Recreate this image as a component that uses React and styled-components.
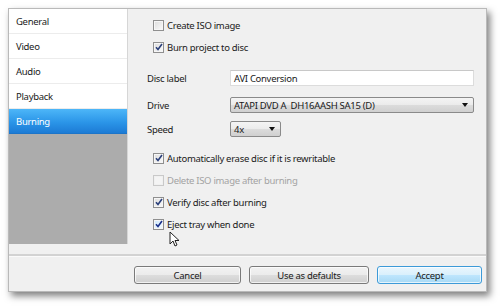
import React from "react";
import styled, { createGlobalStyle } from "styled-components";

const GlobalStyle = createGlobalStyle`
  html, body {
    margin: 0;
    padding: 0;
    background: #ffffff;
  }
  body {
    font-family: "Noto Sans", "Open Sans", sans-serif;
    font-size: 9.5px;
    letter-spacing: -0.3px;
    color: #1a1a1a;
  }
`;

const Page = styled.div`
  /* Display & Box Model */
  width: 500px;
  height: 307px;
  padding: 8px 0 0 8px;
  box-sizing: border-box;
  overflow: hidden;
`;

const Window = styled.div`
  /* Display & Box Model */
  display: flex;
  flex-direction: column;
  width: 479px;
  height: 284px;
  box-sizing: border-box;
  /* Styling */
  background: #f0f0f0;
  border: 1px solid #b9b9b9;
  box-shadow: 3px 4px 7px rgba(0, 0, 0, 0.5);
`;

const Main = styled.div`
  /* Display & Box Model */
  display: flex;
  height: 235px;
`;

const Sidebar = styled.div`
  /* Display & Box Model */
  display: flex;
  flex-direction: column;
  width: 118px;
  /* Styling */
  background: #acacac;
  border-right: 1px solid #d6d6d6;
`;

const NavItem = styled.div`
  /* Display & Box Model */
  display: flex;
  align-items: center;
  height: 25px;
  padding-left: 7px;
  box-sizing: border-box;
  /* Styling */
  background: ${p =>
    p.active ? "linear-gradient(#4db6f8, #2b95e8 55%, #1c7bd5)" : "#ffffff"};
  border-bottom: 1px solid ${p => (p.active ? "#1c74c8" : "#ececec")};
  color: ${p => (p.active ? "#ffffff" : "#1a1a1a")};
  /* Text */
  font-size: 9.5px;
`;

const Content = styled.div`
  /* Display & Box Model */
  flex: 1;
  display: flex;
  flex-direction: column;
  padding: 5px 12px 0 19px;
`;

const CheckRow = styled.label`
  /* Display & Box Model */
  display: flex;
  align-items: center;
  height: 22px;
  padding-left: 6px;
  margin-top: ${p => p.mt || 0}px;
  /* Styling */
  color: ${p => (p.disabled ? "#a3a3a3" : "#1a1a1a")};
`;

const Box = styled.span`
  /* Display & Box Model */
  display: flex;
  align-items: center;
  justify-content: center;
  width: 11px;
  height: 11px;
  margin-right: 3px;
  box-sizing: border-box;
  /* Styling */
  border: 1px solid ${p => (p.disabled ? "#c9c9c9" : "#8f8f8f")};
  background: ${p =>
    p.disabled
      ? "#f4f4f4"
      : p.focus
      ? "linear-gradient(135deg, #cfe9fb, #f4faff)"
      : "linear-gradient(135deg, #dcdcdc, #fbfbfb)"};
  box-shadow: inset 0 0 0 1px ${p => (p.disabled ? "#f0f0f0" : "#f6f6f6")};
`;

const FieldRow = styled.div`
  /* Display & Box Model */
  display: flex;
  align-items: center;
  height: 16px;
  margin-top: ${p => p.mt}px;
`;

const Label = styled.span`
  /* Display & Box Model */
  width: 83px;
  flex-shrink: 0;
`;

const TextInput = styled.div`
  /* Display & Box Model */
  flex: 1;
  height: 16px;
  display: flex;
  align-items: center;
  padding-left: 3px;
  box-sizing: border-box;
  /* Styling */
  background: #ffffff;
  border: 1px solid #dcdcdc;
  border-top-color: #c8c8c8;
`;

const Select = styled.div`
  /* Display & Box Model */
  display: flex;
  align-items: center;
  justify-content: space-between;
  width: ${p => p.w || "auto"};
  flex: ${p => (p.w ? "none" : 1)};
  height: 16px;
  padding: 0 5px 0 3px;
  box-sizing: border-box;
  /* Styling */
  border: 1px solid #8a8a8a;
  border-radius: 2px;
  background: linear-gradient(#f4f4f4, #ebebeb 50%, #dcdcdc 51%, #d0d0d0);
`;

const Arrow = styled.span`
  /* Display & Box Model */
  width: 0;
  height: 0;
  /* Styling */
  border-left: 3.5px solid transparent;
  border-right: 3.5px solid transparent;
  border-top: 4px solid #111;
`;

const Overlay = styled.div`
  position: relative;
  height: 0;
`;

const Cursor = styled.svg`
  position: absolute;
  left: 22px;
  top: -4px;
`;

const Separator = styled.div`
  /* Display & Box Model */
  height: 2px;
  margin: 10px 0 0;
  /* Styling */
  background: #d2d2d2;
  border-bottom: 1px solid #fafafa;
`;

const Footer = styled.div`
  /* Display & Box Model */
  display: flex;
  justify-content: flex-end;
  gap: 8px;
  padding: 9px 4px 0 0;
`;

const Button = styled.button`
  /* Display & Box Model */
  width: ${p => p.w}px;
  height: 18px;
  padding: 0;
  box-sizing: border-box;
  /* Styling */
  border: 1px solid ${p => (p.primary ? "#3c9ad8" : "#7a7a7a")};
  border-radius: 3px;
  background: ${p =>
    p.primary
      ? "linear-gradient(#eaf6fd, #d9f0fc 50%, #bee6fd 51%, #a7d9f5)"
      : "linear-gradient(#f2f2f2, #ebebeb 50%, #dddddd 51%, #cfcfcf)"};
  box-shadow: inset 0 0 0 1px rgba(255, 255, 255, 0.7);
  color: #1a1a1a;
  /* Text */
  font-family: inherit;
  font-size: 9.5px;
  letter-spacing: -0.3px;
`;

function Check({ children, checked, disabled, focus, mt }) {
  return (
    <CheckRow disabled={disabled} mt={mt}>
      <Box disabled={disabled} focus={focus}>
        {checked ? (
          <svg width="8" height="8" viewBox="0 0 8 8">
            <path
              d="M1 4.2 L3 6.5 L7 1"
              fill="none"
              stroke={focus ? "#1a2f8a" : "#2a3f7a"}
              strokeWidth="1.6"
            />
          </svg>
        ) : null}
      </Box>
      {children}
    </CheckRow>
  );
}

const navItems = ["General", "Video", "Audio", "Playback", "Burning"];

export default function App() {
  return (
    <Page>
      <GlobalStyle />
      <Window>
        <Main>
          <Sidebar>
            {navItems.map(item => (
              <NavItem key={item} active={item === "Burning"}>
                {item}
              </NavItem>
            ))}
          </Sidebar>
          <Content>
            <Check>Create ISO image</Check>
            <Check checked>Burn project to disc</Check>
            <FieldRow mt={12}>
              <Label>Disc label</Label>
              <TextInput>AVI Conversion</TextInput>
            </FieldRow>
            <FieldRow mt={11}>
              <Label>Drive</Label>
              <Select>
                ATAPI DVD A&nbsp; DH16AASH SA15 (D)
                <Arrow />
              </Select>
            </FieldRow>
            <FieldRow mt={8}>
              <Label>Speed</Label>
              <Select w="51px">
                4x
                <Arrow />
              </Select>
            </FieldRow>
            <Check checked mt={10}>
              Automatically erase disc if it is rewritable
            </Check>
            <Check disabled>Delete ISO image after burning</Check>
            <Check checked>Verify disc after burning</Check>
            <Check checked focus>
              Eject tray when done
            </Check>
            <Overlay>
              <Cursor width="11" height="16" viewBox="0 0 11 16">
                <path
                  d="M1 1 L1 13 L4 10 L6 15 L8 14 L6 9.5 L10 9.5 Z"
                  fill="#ffffff"
                  stroke="#222"
                  strokeWidth="1"
                  strokeLinejoin="round"
                />
              </Cursor>
            </Overlay>
          </Content>
        </Main>
        <Separator />
        <Footer>
          <Button w={107}>Cancel</Button>
          <Button w={120}>Use as defaults</Button>
          <Button w={105} primary>
            Accept
          </Button>
        </Footer>
      </Window>
    </Page>
  );
}
